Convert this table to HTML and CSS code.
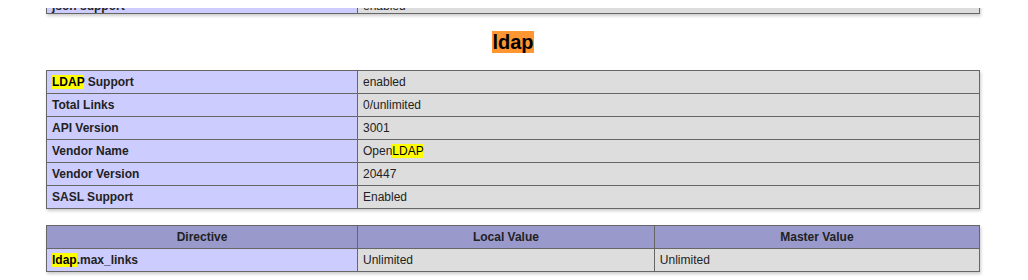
FILE: index.html
```html
<!DOCTYPE html>
<html>
<head>
<meta charset="utf-8">
<link rel="stylesheet" href="styles.css">
</head>
<body>
<div class="center">
<table class="first">
<tr><td class="e">json support</td><td class="v">enabled</td></tr>
</table>
<h2><a name="module_ldap"><span class="hl-active">ldap</span></a></h2>
<table>
<tr><td class="e"><span class="hl">LDAP</span> Support</td><td class="v">enabled</td></tr>
<tr><td class="e">Total Links</td><td class="v">0/unlimited</td></tr>
<tr><td class="e">API Version</td><td class="v">3001</td></tr>
<tr><td class="e">Vendor Name</td><td class="v">Open<span class="hl">LDAP</span></td></tr>
<tr><td class="e">Vendor Version</td><td class="v">20447</td></tr>
<tr><td class="e">SASL Support</td><td class="v">Enabled</td></tr>
</table>
<table>
<tr class="h"><th>Directive</th><th>Local Value</th><th>Master Value</th></tr>
<tr><td class="e"><span class="hl">ldap</span>.max_links</td><td class="v">Unlimited</td><td class="v">Unlimited</td></tr>
</table>
</div>
</body>
</html>
```
FILE: styles.css
```css
body {
  background-color: #fff;
  color: #222;
  font-family: "Liberation Sans", Arial, sans-serif;
  margin: 8px 9px 8px 7px;
}
table {
  border-collapse: collapse;
  border: 0;
  width: 934px;
  box-shadow: 1px 2px 3px #ccc;
}
.center {
  text-align: center;
}
.center table {
  margin: 1em auto;
  text-align: left;
}
.center table.first {
  margin-top: -14px;
}
.center table.first td {
  padding-bottom: 0;
}
.center th {
  text-align: center;
}
td, th {
  border: 1px solid #666;
  font-size: 75%;
  vertical-align: baseline;
  padding: 4px 5px;
}
h2 {
  font-size: 125%;
  margin: 0.83em 0;
}
.e {
  background-color: #ccf;
  width: 300px;
  font-weight: bold;
}
.h {
  background-color: #99c;
  font-weight: bold;
}
.v {
  background-color: #ddd;
  max-width: 300px;
  overflow-x: auto;
  word-wrap: break-word;
}
.hl {
  background-color: #ffff00;
  color: #000;
}
.hl-active {
  background-color: #ff9632;
  color: #000;
}
```
